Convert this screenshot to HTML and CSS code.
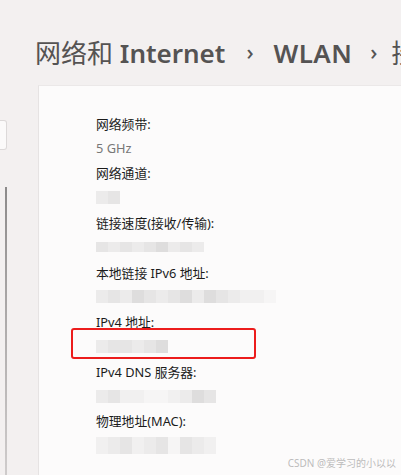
FILE: index.html
```html
<!DOCTYPE html>
<html lang="zh-CN">
<head>
<meta charset="utf-8">
<link rel="stylesheet" href="styles.css">
</head>
<body>
<div class="page">
  <header class="header">
    <h1 class="crumbs">
      <span class="crumb"><span class="cjk">网络和</span> Internet</span>
      <span class="chev">›</span>
      <span class="crumb wide">WLAN</span>
      <span class="chev tight">›</span>
      <span class="crumb cjk">接口属性</span>
    </h1>
  </header>
  <div class="main">
    <aside class="side">
      <div class="side-item"></div>
      <div class="side-track"></div>
    </aside>
    <section class="card">
      <div class="row label">网络频带:</div>
      <div class="row value">5 GHz</div>
      <div class="row label">网络通道:</div>
      <div class="row"><div class="blur"><i class="c2"></i><i class="c1"></i></div></div>
      <div class="row label">链接速度(接收/传输):</div>
      <div class="row"><div class="blur thin"><i class="c1"></i><i class="c2"></i><i class="c1"></i><i class="c2"></i><i class="c1"></i><i class="c3"></i><i class="c2"></i><i class="c1"></i><i class="c2"></i></div></div>
      <div class="row label">本地链接 IPv6 地址:</div>
      <div class="row"><div class="blur"><i class="c2"></i><i class="c1"></i><i class="c2"></i><i class="c3"></i><i class="c1"></i><i class="c2"></i><i class="c1"></i><i class="c3"></i><i class="c2"></i><i class="c3"></i><i class="c1"></i><i class="c2"></i><i class="c4"></i><i class="c4"></i><i class="c5"></i></div></div>
      <div class="row label">IPv4 地址:</div>
      <div class="row"><div class="blur"><i class="c2"></i><i class="c1"></i><i class="c1"></i><i class="c2"></i><i class="c1"></i><i class="c3"></i></div></div>
      <div class="row label">IPv4 DNS 服务器:</div>
      <div class="row"><div class="blur"><i class="c2"></i><i class="c1"></i><i class="c4"></i><i class="c4"></i><i class="c5"></i><i class="c5"></i><i class="c4"></i><i class="c2"></i><i class="c3"></i><i class="c1"></i></div></div>
      <div class="row label">物理地址(MAC):</div>
      <div class="row"><div class="blur tall"><i class="c4"></i><i class="c2"></i><i class="c1"></i><i class="c4"></i><i class="c2"></i><i class="c1"></i><i class="c5"></i><i class="c1"></i><i class="c2"></i><i class="c4"></i></div></div>
      <div class="highlight"></div>
    </section>
  </div>
  <div class="watermark">CSDN @爱学习的小以以</div>
</div>
</body>
</html>
```

FILE: styles.css
```css
* { box-sizing: border-box; }
html, body {
  margin: 0;
  padding: 0;
  width: 401px;
  height: 475px;
  overflow: hidden;
  background: #f3f0f0;
  font-family: "Noto Sans", "Noto Sans CJK SC", sans-serif;
}
.page {
  position: relative;
  width: 401px;
  height: 475px;
  display: flex;
  flex-direction: column;
}
.header {
  height: 85px;
  padding: 37px 0 0 35px;
  overflow: hidden;
}
.crumbs {
  margin: 0;
  display: flex;
  align-items: center;
  white-space: nowrap;
  font-size: 26px;
  line-height: 32px;
  font-weight: 600;
  color: #555353;
}
.cjk { font-weight: 400; }
.crumb.wide { letter-spacing: 0.4px; }
.chev {
  font-size: 22px;
  font-weight: 500;
  color: #555;
  margin: 0 20px 0 21px;
  position: relative;
  top: -2px;
}
.chev.tight { margin: 0 14px 0 18px; }
.main {
  flex: 1;
  display: flex;
  min-height: 0;
}
.side {
  width: 38px;
  flex: none;
  display: flex;
  flex-direction: column;
}
.side-item {
  margin-top: 35px;
  width: 7px;
  height: 30px;
  background: #fbfafa;
  border: 1px solid #dcd9d9;
  border-left: none;
  border-radius: 0 3px 3px 0;
}
.side-track {
  margin-top: 37px;
  margin-left: 5px;
  width: 2px;
  flex: 1;
  background: linear-gradient(#8c8a8a, #a9a6a6 40%, #cfcccc);
}
.card {
  position: relative;
  flex: 1;
  background: #fcfbfb;
  border-left: 1px solid #e6e3e3;
  border-top: 1px solid #ebe8e8;
  padding: 25px 0 0 57px;
}
.row {
  height: 24.8px;
  display: flex;
  align-items: center;
  font-size: 12.8px;
  color: #1b1b1b;
  white-space: nowrap;
}
.value { color: #777; }
.blur { display: flex; height: 13px; }
.blur.thin { height: 10px; }
.blur.tall { height: 17px; }
.blur i {
  display: block;
  width: 12px;
  height: 100%;
}
.c1 { background: #e6e5e5; }
.c2 { background: #ecebeb; }
.c3 { background: #dedddd; }
.c4 { background: #f1f0f0; }
.c5 { background: #f6f5f5; }
.highlight {
  position: absolute;
  left: 32px;
  top: 242px;
  width: 185px;
  height: 31px;
  border: 2px solid #ec1c1c;
  border-radius: 3px;
}
.watermark {
  position: absolute;
  right: 5px;
  bottom: 5px;
  font-size: 10px;
  color: #bcbcbc;
}
```
